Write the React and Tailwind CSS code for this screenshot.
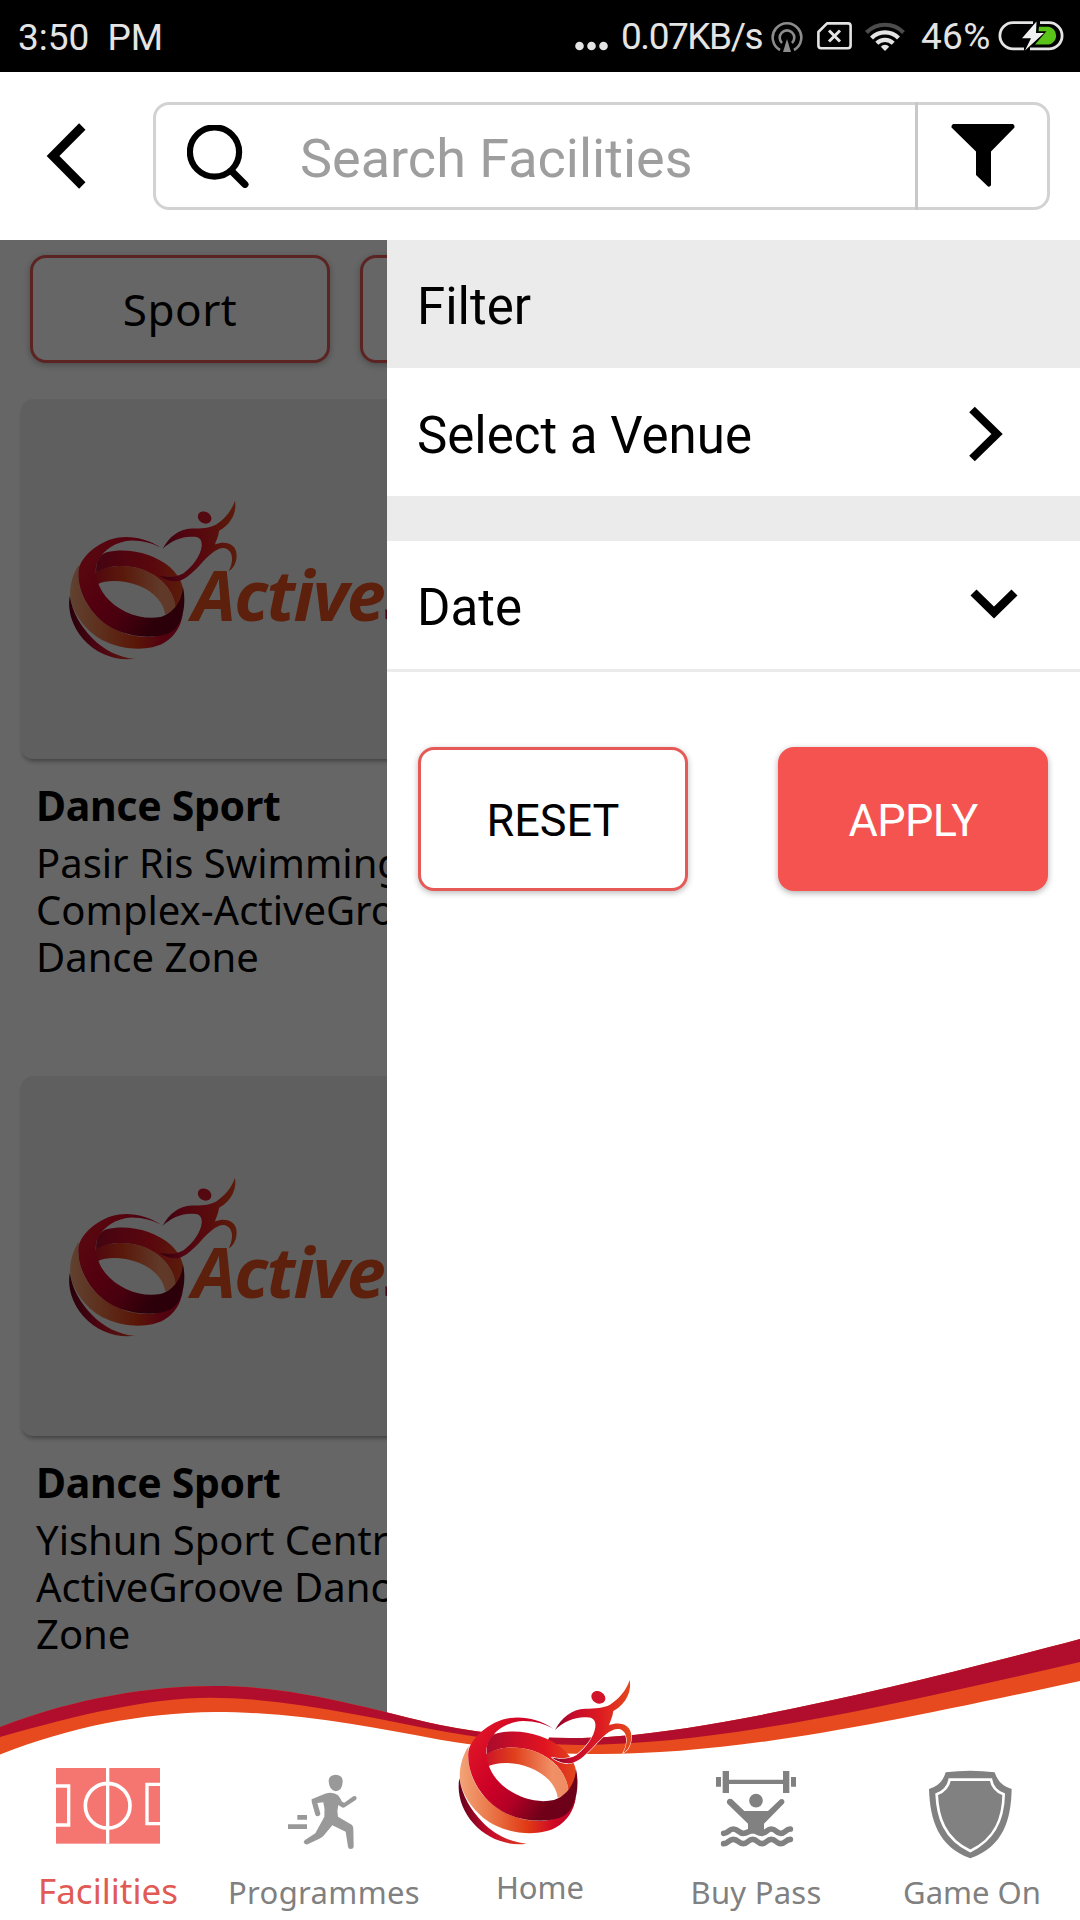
import React, { useId } from 'react';

const NOTO = "font-['Noto_Sans',sans-serif]";

/* ---------- Brand mark: ribbon ring with a leaping figure ---------- */
const RIBBONS = {
  band: [[0, '#e41a26'], [0.4, '#cc0026'], [0.6, '#b40026'], [0.85, '#700018'], [1, '#6c001a']],
  back: [[0, '#a80c2c'], [0.35, '#cc0e28'], [0.65, '#e01420'], [1, '#e04a1c']],
  inner: [[0, '#cc1428'], [0.35, '#e0401c'], [0.8, '#f09066'], [1, '#ee8c62']],
  lower: [[0, '#f2a478'], [0.25, '#ea7a4c'], [0.58, '#e03a14'], [0.8, '#d00a26'], [1, '#c00028']],
  tail: [[0, '#64001a'], [0.45, '#c40a2c'], [1, '#e0401c']],
  man: [[0, '#780026'], [0.25, '#c40a2c'], [0.6, '#dc1a22'], [1, '#e44a1c']],
};

function BrandMark({ className, outlined }) {
  const id = useId();
  const fill = (n) => `url(#${id}${n})`;
  return (
    <svg className={className} viewBox="60 105 600 519" preserveAspectRatio="none">
      <defs>
        {Object.entries(RIBBONS).map(([name, list]) => (
          <linearGradient
            key={name}
            id={`${id}${name}`}
            x1="0"
            y1={name === 'band' ? '0.1' : '0'}
            x2="1"
            y2={name === 'band' ? '0.75' : '0'}
          >
            {list.map(([o, c]) => (
              <stop key={o} offset={o} stopColor={c} />
            ))}
          </linearGradient>
        ))}
      </defs>
      {outlined && (
        <path
          fill="#fff"
          d="M198 330C205 270 300 222 398 266L384 300L440 345L468 400L420 475L340 490L225 420Z"
        />
      )}
      <path
        fill={fill('back')}
        d="M200 345C197 312 208 288 232 280C300 264 380 285 430 328C455 352 470 380 469 405C466 425 456 445 445 456C442 400 400 352 335 331C280 315 230 322 200 345Z"
      />
      <path
        fill={fill('inner')}
        d="M198 343C235 318 295 317 340 332C402 354 442 402 446 455C437 464 425 470 413 473C410 440 380 402 330 383C280 364 230 366 204 379C196 366 196 355 198 343Z"
      />
      <path
        fill={fill('lower')}
        d="M146 318C127 348 116 385 120 424C130 474 172 532 230 558C290 586 368 586 410 561C442 541 462 512 468 470C450 520 400 546 350 543C270 540 195 492 163 425C145 388 141 350 146 318Z"
      />
      <path
        fill={fill('band')}
        d="M400 266C360 238 310 228 270 234C205 244 152 296 145 335C139 405 185 478 245 513C305 547 385 550 430 529C468 508 480 440 468 388C466 430 440 468 402 480C340 494 268 464 229 417C200 380 190 335 206 305C222 272 262 245 310 243C345 243 375 252 400 266Z"
      />
      <path
        fill={fill('tail')}
        d="M118 415C110 460 125 510 160 550C200 595 260 619 320 611C270 607 222 583 187 546C152 509 127 470 118 415Z"
      />
      <g
        fill={fill('man')}
        stroke={outlined ? '#fff' : 'none'}
        strokeWidth={outlined ? 3.5 : 0}
        paintOrder="stroke"
      >
        <ellipse cx="535" cy="172" rx="22" ry="18" transform="rotate(30 535 172)" fill="#d2142a" />
        <path d="M405 270C425 232 455 208 495 206C525 206 550 204 570 194C598 176 618 152 629 120C635 150 622 190 580 213C578 230 570 246 567 256C600 242 634 255 634 288C635 310 624 332 610 338C624 312 626 275 598 267C572 264 548 290 520 320C490 352 465 373 440 370C420 368 405 360 395 352C420 360 450 357 470 345C500 322 522 290 526 262C528 242 520 232 500 232C465 230 430 245 405 270Z" />
      </g>
    </svg>
  );
}

/* ---------- Status bar ---------- */
function StatusBar() {
  return (
    <div className="flex h-[72px] shrink-0 items-center bg-black pl-[18px] pr-4 text-[37px] leading-[72px] text-[#e4e4e4]">
      <span className="pt-[3px] [word-spacing:9px]">3:50 PM</span>
      <svg className="ml-auto mt-[19px] h-[10px] w-[33px]" viewBox="0 0 33 10" fill="#e4e4e4">
        <circle cx="4.5" cy="5" r="4.3" />
        <circle cx="16.5" cy="5" r="4.3" />
        <circle cx="28.5" cy="5" r="4.3" />
      </svg>
      <span className="ml-[13px] w-[142px] whitespace-nowrap pt-[2px] tracking-[-1.45px]">0.07KB/s</span>
      <svg className="ml-2 h-[31px] w-[32px]" viewBox="0 0 32 31" fill="none" stroke="#8c8c8c" strokeWidth="2.6">
        <path d="M9 29A14.3 14.3 0 1 1 23 29" />
        <path d="M11 22A7.3 7.3 0 1 1 21 22" />
        <path d="M16 18L20 31H12Z" fill="#8c8c8c" stroke="none" />
      </svg>
      <svg className="ml-[14px] h-[28px] w-[35px]" viewBox="0 0 35 28" fill="none" stroke="#e4e4e4" strokeWidth="2.6">
        <path d="M10 1.4H31Q33.6 1.4 33.6 4V23.5Q33.6 26.2 31 26.2H4Q1.4 26.2 1.4 23.5V10Z" strokeLinejoin="round" />
        <path d="M12 8.5L23 19.5M23 8.5L12 19.5" strokeWidth="3" />
      </svg>
      <svg className="ml-[13px] h-[29px] w-[40px]" viewBox="0 0 40 29" fill="none" strokeWidth="4.2">
        <path d="M1.5 10.5A26 26 0 0 1 38.5 10.5" stroke="#4c4c4c" />
        <path d="M6.5 16A19 19 0 0 1 33.5 16" stroke="#e4e4e4" />
        <path d="M11.8 21.2A11.6 11.6 0 0 1 28.2 21.2" stroke="#e4e4e4" />
        <path d="M20 29L15.8 24.8A5.5 5.5 0 0 1 24.2 24.8Z" fill="#e4e4e4" />
      </svg>
      <span className="ml-4 w-[69px] whitespace-nowrap pt-[1px] tracking-[0.3px]">46%</span>
      <svg className="ml-[8px] h-[30px] w-[66px]" viewBox="0 0 66 30" fill="none">
        <path d="M35 1.6H15A13.1 13.1 0 0 0 15 27.8H26" stroke="#e4e4e4" strokeWidth="2.8" />
        <path d="M42 1.6H51A13.1 13.1 0 0 1 51 27.8H32" stroke="#e4e4e4" strokeWidth="2.8" />
        <path d="M41 5.8H50.5A9 9 0 0 1 50.5 23.6H37L48.5 10.2H40.5Z" fill="#5ac31a" />
        <path d="M38.5 0.5L24 17.2H33L27 29.5L46 12H38Z" fill="#f0f0f0" />
      </svg>
    </div>
  );
}

/* ---------- Search header ---------- */
function Header() {
  return (
    <header className="flex h-[168px] shrink-0 items-center bg-white pl-[46px] pr-[30px]">
      <svg className="h-[66px] w-[40px]" viewBox="0 0 40 66" fill="none" stroke="#000" strokeWidth="9">
        <path d="M36.3 3.5L7 33L36.3 62.5" />
      </svg>
      <div className="ml-[67px] flex h-[108px] flex-1 rounded-[16px] border-[3px] border-[#d2d2d2]">
        <div className="flex flex-1 items-center pl-[31px]">
          <svg className="h-[63px] w-[62px]" viewBox="0 0 62 63" fill="none" stroke="#000">
            <circle cx="27.5" cy="27" r="24.6" strokeWidth="6.2" />
            <path d="M44.5 46L58 59.5" strokeWidth="7" strokeLinecap="round" />
          </svg>
          <span className="ml-[51px] pt-[5px] text-[54px] leading-none text-[#9e9e9e]">Search Facilities</span>
        </div>
        <div className="-my-[3px] flex w-[132px] items-center border-l-[3px] border-[#c8c8c8] pb-[1px] pl-[33px]">
          <svg className="h-[63px] w-[64px]" viewBox="0 0 64 63">
            <path
              d="M2 0H62Q64 1 63.5 3.5L40 27.5V61Q39.5 63 37 62.6L25 51V27.5L0.5 3.5Q0 1 2 0Z"
              fill="#000"
            />
          </svg>
        </div>
      </div>
    </header>
  );
}

/* ---------- Facility list behind the drawer ---------- */
function FacilityCard({ title, lines }) {
  return (
    <article className="h-[677px]">
      <div className="flex h-[360px] w-[1038px] overflow-hidden rounded-[12px] bg-[#eeeeee] shadow-[0_4px_5px_-2px_rgba(0,0,0,0.4)]">
        <BrandMark className="ml-[30px] mt-[97px] h-[167px] w-[194px] shrink-0" />
        <span
          className={`${NOTO} -ml-[53px] mt-[160px] text-[70px] font-bold italic leading-[70px] tracking-[-1.7px] text-[#e6521e]`}
        >
          Active<span className="text-[#b4103a]">S</span>
        </span>
      </div>
      <div className={`${NOTO} whitespace-nowrap pl-[15px] text-black`}>
        <h3 className="mt-[18px] pt-[1px] text-[41px] font-bold leading-[55px] tracking-[-0.3px]">{title}</h3>
        <p className="mt-[6px] text-[40px] leading-[47px]">
          {lines.map((line) => (
            <span key={line} className="block">{line}</span>
          ))}
        </p>
      </div>
    </article>
  );
}

function FacilityList() {
  const pill =
    'flex h-[108px] w-[300px] shrink-0 items-center justify-center rounded-[16px] border-[3px] border-[#e45a55] bg-white shadow-[0_2px_7px_rgba(0,0,0,0.28)]';
  return (
    <div className="relative w-[387px] shrink-0 overflow-hidden bg-white">
      <div className="flex gap-[30px] pl-[30px] pt-[15px]">
        <div className={`${NOTO} ${pill} text-[44px] leading-none tracking-[0.5px] text-black`}>Sport</div>
        <div className={pill} />
      </div>
      <div className="pl-[21px] pt-[36px]">
        <FacilityCard title="Dance Sport" lines={['Pasir Ris Swimming', 'Complex-ActiveGro', 'Dance Zone']} />
        <FacilityCard title="Dance Sport" lines={['Yishun Sport Centr', 'ActiveGroove Danc', 'Zone']} />
      </div>
      <div className="absolute inset-0 bg-black/60" />
    </div>
  );
}

/* ---------- Filter drawer ---------- */
function FilterDrawer() {
  return (
    <aside className="flex-1 bg-white text-[51px] leading-none text-black">
      <div className="flex h-[128px] items-center bg-[#ebebeb] pl-[30px] pt-[5px]">Filter</div>
      <div className="flex h-[128px] items-center justify-between pl-[30px] pr-[77px]">
        <span className="pt-[6px]">Select a Venue</span>
        <svg className="mt-[4px] h-[56px] w-[34px]" viewBox="0 0 34 56" fill="none" stroke="#000" strokeWidth="8">
          <path d="M3 3.5L28 28L3 52.5" />
        </svg>
      </div>
      <div className="h-[45px] bg-[#ebebeb]" />
      <div className="flex h-[131px] items-center justify-between border-b-[3px] border-[#ebebeb] pl-[30px] pr-[62px]">
        <span className="pt-[5px]">Date</span>
        <svg className="mb-[2px] h-[30px] w-[48px]" viewBox="0 0 48 30" fill="none" stroke="#000" strokeWidth="8.6">
          <path d="M3.5 3.5L24 23.5L44.5 3.5" />
        </svg>
      </div>
      <div className="flex justify-between pl-[31px] pr-8 pt-[75px] text-[45px]">
        <div className="flex h-[144px] w-[270px] items-center justify-center rounded-[16px] border-[3px] border-[#e55a57] bg-white pt-0.5 shadow-[0_2px_6px_rgba(0,0,0,0.28)]">
          RESET
        </div>
        <div className="flex h-[144px] w-[270px] items-center justify-center rounded-[16px] bg-[#f55350] pt-0.5 tracking-[-0.6px] text-white shadow-[0_2px_6px_rgba(0,0,0,0.32)]">
          APPLY
        </div>
      </div>
    </aside>
  );
}

/* ---------- Bottom navigation ---------- */
function PitchIcon() {
  return (
    <svg className="h-[92px] w-[120px]" viewBox="144 381 360 276" fill="none" stroke="#fff">
      <rect x="168" y="384" width="312" height="227" fill="#f57671" stroke="none" />
      <path d="M323 384V611" strokeWidth="10" />
      <circle cx="323" cy="497" r="67" strokeWidth="11" />
      <path d="M168 438H206V555H168M480 433H441V551H480" strokeWidth="10" />
    </svg>
  );
}

function RunnerIcon() {
  return (
    <svg className="h-[92px] w-[120px]" viewBox="792 381 360 276" fill="#999">
      <path d="M986 424Q986 405 1007 404Q1029 405 1028 426Q1026 453 1007 454Q988 452 986 424Z" />
      <path d="M935 478L975 461Q1000 454 1014 466Q1022 475 1026 485L1033 488L1060 469Q1069 466 1070 474Q1070 478 1066 481L1034 502Q1029 505 1024 501L1015 495Q1010 512 1014 530L1055 554Q1060 558 1060 566L1061 620Q1060 627 1052 627Q1045 627 1044 620L1037 575L997 556L970 588Q965 593 958 596L923 613Q914 615 911 607Q911 602 916 599L946 580L973 530Q976 508 970 487L952 489L961 520Q961 528 953 529Q948 529 946 524L935 485Z" />
      <path d="M892 525H921V539H892ZM864 553H921V567H864Z" />
    </svg>
  );
}

function LifterIcon() {
  return (
    <svg className="h-[92px] w-[120px]" viewBox="48 441 360 276" fill="#818181">
      <path d="M128 453H147V479H309V453H328V519H309V492H147V519H128ZM108 471H123V500H108ZM333 471H348V500H333Z" />
      <circle cx="228" cy="542" r="20.5" />
      <path d="M141 549Q139 537 150 536L156 538L193 573H264L301 538Q310 534 313 543Q314 547 311 551L252 611V640H204V611L143 552Z" />
      <path
        d="M131 640C146 640 146 627 160 627C175 627 176 640 190 640C204 640 204 632 218 632C232 632 232 640 246 640C260 640 260 627 274 627C288 627 288 640 302 640C316 640 316 628 331 627M131 671C146 671 146 658 160 658C175 658 176 671 190 671C204 671 204 658 218 658C232 658 232 671 246 671C260 671 260 658 274 658C288 658 288 671 302 671C316 671 316 659 331 658"
        fill="none"
        stroke="#818181"
        strokeWidth="17"
        strokeLinecap="round"
      />
    </svg>
  );
}

function ShieldIcon() {
  return (
    <svg className="h-[92px] w-[120px]" viewBox="696 441 360 276" fill="#818181">
      <path d="M797 457Q870 448 944 457Q955 495 995 507C993 600 970 680 871 715C775 680 750 600 747 507Q787 495 797 457Z" />
      <path
        d="M809 479H933Q938 510 971 523C970 590 950 655 871 693C792 655 773 590 770 523Q803 510 809 479Z"
        fill="none"
        stroke="#fff"
        strokeWidth="8"
      />
    </svg>
  );
}

function NavItem({ icon, label, labelClass }) {
  return (
    <div className="flex w-[216px] flex-col items-center pt-[129px]">
      {icon}
      <span className={labelClass}>{label}</span>
    </div>
  );
}

function BottomNav() {
  const gray = 'mt-[13px] text-[31px] leading-[40px] whitespace-nowrap text-[#808080]';
  return (
    <nav className={`${NOTO} relative z-10 -mt-[282px] h-[282px] w-[1080px] shrink-0 overflow-hidden`}>
      <svg className="absolute inset-0 h-full w-full" viewBox="0 1638 1080 282">
        <path
          fill="#fff"
          d="M0 1740C80 1708 150 1698 215 1698C300 1698 400 1722 480 1738C560 1750 640 1750 700 1740C830 1720 950 1690 1080 1660V1920H0Z"
        />
        <path
          fill="#e64a1e"
          d="M0 1727C75 1698 150 1686 215 1686C300 1686 375 1711 440 1725C500 1737 560 1741 620 1736C740 1726 930 1679 1080 1639V1681C890 1722 740 1754 600 1754C540 1754 490 1748 440 1739.7C370 1727 300 1712 215 1712C140 1713 70 1727 0 1754.5Z"
        />
        <path
          fill="#b10e2d"
          d="M0 1727C75 1698 150 1686 215 1686C300 1686 375 1711 440 1725C500 1737 560 1741 620 1736C740 1726 930 1679 1080 1639V1662C880 1708 720 1744 580 1745C530 1744 480 1738 440 1730.7C370 1718 290 1698 210 1697.7C150 1698 80 1714 0 1737Z"
        />
      </svg>
      <div className="relative flex">
        <NavItem
          icon={<PitchIcon />}
          label="Facilities"
          labelClass="mt-[12px] text-[35px] leading-[40px] text-[#e15a55]"
        />
        <NavItem icon={<RunnerIcon />} label="Programmes" labelClass={`${gray} tracking-[0.35px]`} />
        <div className="flex w-[216px] flex-col items-center pt-[37px]">
          <BrandMark className="h-[173px] w-[200px]" outlined />
          <span className="mt-[19px] text-[31px] leading-[40px] text-[#808080]">Home</span>
        </div>
        <NavItem icon={<LifterIcon />} label="Buy Pass" labelClass={`${gray} tracking-[0.25px]`} />
        <NavItem icon={<ShieldIcon />} label="Game On" labelClass={gray} />
      </div>
    </nav>
  );
}

export default function App() {
  return (
    <div className="flex h-[1920px] w-[1080px] flex-col overflow-hidden bg-white font-[Roboto,sans-serif]">
      <StatusBar />
      <Header />
      <main className="flex min-h-0 flex-1 overflow-hidden">
        <FacilityList />
        <FilterDrawer />
      </main>
      <BottomNav />
    </div>
  );
}
